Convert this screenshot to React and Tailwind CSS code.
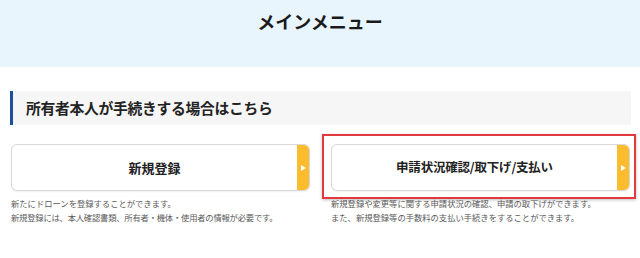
export default function App() {
  const font = { fontFamily: '"Noto Sans CJK JP", "Noto Sans", sans-serif' };
  const Arrow = () => (
    <svg width="5" height="6" viewBox="0 0 5 6" className="block">
      <path d="M0 0 L5 3 L0 6 Z" fill="#ffffff" />
    </svg>
  );
  const Card = ({ label, size }) => (
    <div className="flex h-[47px] rounded-[6px] border border-[#d9d9d9] bg-white overflow-hidden shadow-[0_1px_2px_rgba(0,0,0,0.06)]">
      <div className={"flex-1 flex items-center justify-center font-bold text-[#222] " + size}>
        {label}
      </div>
      <div className="w-[12px] bg-[#fbbd2d] flex items-center justify-center">
        <Arrow />
      </div>
    </div>
  );
  return (
    <div className="w-[640px] h-[258px] bg-white overflow-hidden" style={font}>
      <div className="h-[67px] bg-[#e9f5fd] flex justify-center pt-[8px]">
        <div className="text-[18px] font-bold text-[#1a1a1a] leading-[26px]">メインメニュー</div>
      </div>
      <div className="ml-[10px] w-[621px] pt-[24px]">
        <div className="h-[34px] border-l-[3px] border-[#1c4f9c] bg-[#f6f6f6] flex items-center pl-[13px] text-[14.8px] font-bold text-[#222] tracking-[-0.3px]">
          所有者本人が手続きする場合はこちら
        </div>
        <div className="ml-[1px] w-[619px] mt-[19px] grid grid-cols-2 gap-[21px]">
          <div>
            <Card label="新規登録" size="text-[13px]" />
            <div className="mt-[5px] text-[8.3px] leading-[14px] text-[#5a5a5a]">
              <div>新たにドローンを登録することができます。</div>
              <div className="tracking-[-0.2px]">新規登録には、本人確認書類、所有者・機体・使用者の情報が必要です。</div>
            </div>
          </div>
          <div>
            <div className="relative">
              <Card label="申請状況確認/取下げ/支払い" size="text-[12.5px] tracking-[-0.2px]" />
              <div className="absolute -left-[9px] -top-[10px] -right-[6px] -bottom-[8px] border-2 border-[#e2393f] shadow-[0_1px_3px_rgba(0,0,0,0.25)] pointer-events-none" />
            </div>
            <div className="mt-[5px] text-[8.3px] leading-[14px] text-[#5a5a5a]">
              <div>新規登録や変更等に関する申請状況の確認、申請の取下げができます。</div>
              <div>また、新規登録等の手数料の支払い手続きをすることができます。</div>
            </div>
          </div>
        </div>
      </div>
    </div>
  );
}
